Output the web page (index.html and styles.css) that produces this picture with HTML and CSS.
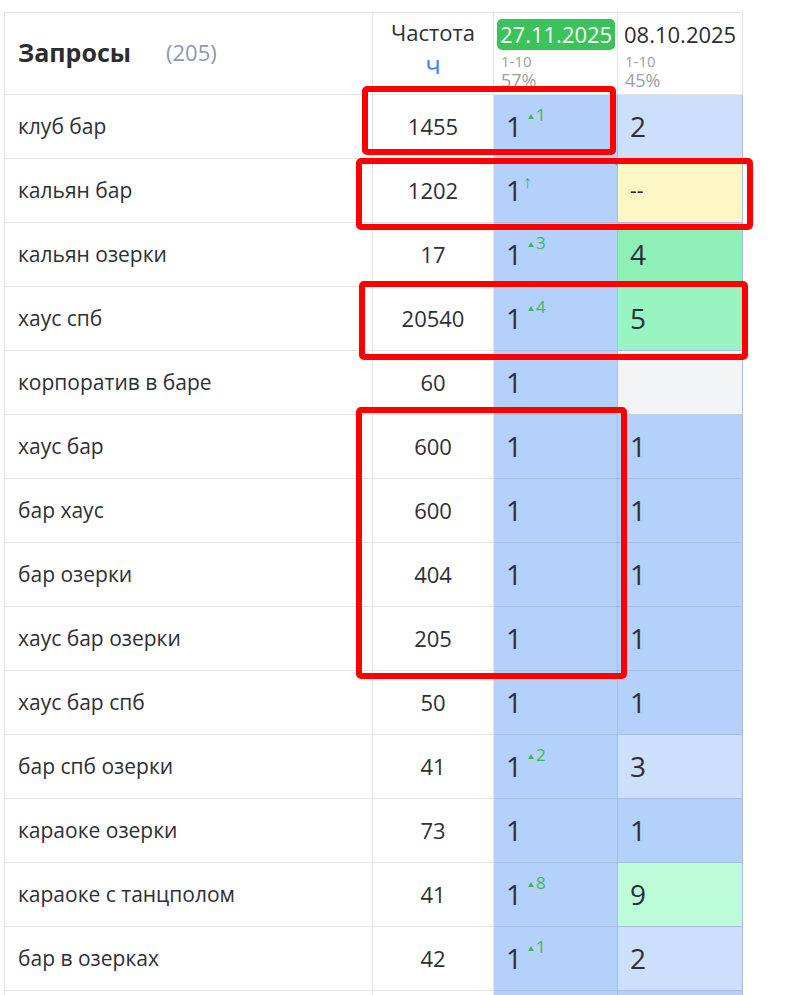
FILE: index.html
```html
<!DOCTYPE html>
<html lang="ru">
<head>
<meta charset="utf-8">
<link rel="stylesheet" href="styles.css">
</head>
<body>
<div class="page">
  <div class="grid">
    <div class="cell head qhead"><span class="title">Запросы</span><span class="count">(205)</span></div>
    <div class="cell head fhead"><span class="flabel">Частота</span><span class="flink">ч</span></div>
    <div class="cell head dhead"><span class="badge">27.11.2025</span><span class="sub">1-10</span><span class="sub pct">57%</span></div>
    <div class="cell head dhead"><span class="date">08.10.2025</span><span class="sub">1-10</span><span class="sub pct">45%</span></div>

    <div class="cell q">клуб бар</div><div class="cell f">1455</div><div class="cell d blue">1<span class="up"><i class="tri"></i>1</span></div><div class="cell d lblue">2</div>
    <div class="cell q">кальян бар</div><div class="cell f">1202</div><div class="cell d blue corner">1<span class="up arrow">↑</span></div><div class="cell d yellow">--</div>
    <div class="cell q">кальян озерки</div><div class="cell f">17</div><div class="cell d blue">1<span class="up"><i class="tri"></i>3</span></div><div class="cell d green">4</div>
    <div class="cell q">хаус спб</div><div class="cell f">20540</div><div class="cell d blue">1<span class="up"><i class="tri"></i>4</span></div><div class="cell d green2">5</div>
    <div class="cell q">корпоратив в баре</div><div class="cell f">60</div><div class="cell d blue">1</div><div class="cell d grey"></div>
    <div class="cell q">хаус бар</div><div class="cell f">600</div><div class="cell d blue">1</div><div class="cell d blue">1</div>
    <div class="cell q">бар хаус</div><div class="cell f">600</div><div class="cell d blue">1</div><div class="cell d blue">1</div>
    <div class="cell q">бар озерки</div><div class="cell f">404</div><div class="cell d blue">1</div><div class="cell d blue">1</div>
    <div class="cell q">хаус бар озерки</div><div class="cell f">205</div><div class="cell d blue">1</div><div class="cell d blue">1</div>
    <div class="cell q">хаус бар спб</div><div class="cell f">50</div><div class="cell d blue">1</div><div class="cell d blue">1</div>
    <div class="cell q">бар спб озерки</div><div class="cell f">41</div><div class="cell d blue">1<span class="up"><i class="tri"></i>2</span></div><div class="cell d lblue">3</div>
    <div class="cell q">караоке озерки</div><div class="cell f">73</div><div class="cell d blue">1</div><div class="cell d blue">1</div>
    <div class="cell q">караоке с танцполом</div><div class="cell f">41</div><div class="cell d blue">1<span class="up"><i class="tri"></i>8</span></div><div class="cell d mint">9</div>
    <div class="cell q">бар в озерках</div><div class="cell f">42</div><div class="cell d blue">1<span class="up"><i class="tri"></i>1</span></div><div class="cell d lblue">2</div>
    <div class="cell q"></div><div class="cell f"></div><div class="cell d blue"></div><div class="cell d blue"></div>
  </div>

  <div class="mark m1"></div>
  <div class="mark m2"></div>
  <div class="mark m3"></div>
  <div class="mark m4"></div>
</div>
</body>
</html>
```

FILE: styles.css
```css
* { box-sizing: border-box; }
html, body { margin: 0; padding: 0; background: #fff; overflow: hidden; }
body { font-family: "Open Sans", "Noto Sans", sans-serif; color: #2e2f33; }
.page { position: relative; width: 801px; height: 995px; padding: 12px 0 0 4px; overflow: hidden; }
.grid {
  display: grid;
  grid-template-columns: 368px 121px 124px 125px;
  grid-auto-rows: 64px;
  grid-template-rows: 82px;
  border-top: 1px solid #e3e3e3;
  border-left: 1px solid #e3e3e3;
  width: 738px;
}
.cell {
  border-right: 1px solid #e3e3e3;
  border-bottom: 1px solid #e3e3e3;
  display: flex;
  align-items: center;
  position: relative;
}
.head { flex-direction: column; align-items: flex-start; }
.qhead { flex-direction: row; align-items: center; padding: 0 0 4px 13px; }
.title { font-weight: 700; font-size: 25px; color: #2b2d31; }
.count { font-size: 22px; color: #8d9aab; margin-left: 35px; }
.fhead { align-items: center; padding-top: 5px; }
.flabel { font-size: 22px; line-height: 28px; color: #2e2f33; }
.flink { font-size: 25px; color: #3b82f6; line-height: 30px; margin-top: 3px; }
.dhead { padding: 6px 0 0 3px; overflow: hidden; }
.badge {
  background: #3cc25a;
  color: #fff;
  font-size: 22px;
  line-height: 31px;
  padding: 0 3px;
  border-radius: 5px;
}
.date { font-size: 22px; line-height: 31px; padding: 0 2px 0 3px; color: #2b2d31; }
.sub { font-size: 15px; line-height: 17px; color: #9aa0a9; padding-left: 4px; margin-top: 3px; }
.dhead .sub.pct { font-size: 18px; line-height: 20px; margin-top: 0; }
.q { font-size: 21px; padding-left: 13px; padding-bottom: 2px; }
.f { font-size: 22px; justify-content: center; padding-bottom: 2px; }
.d {
  font-size: 28px;
  padding-left: 12px;
  padding-bottom: 2px;
  border-bottom-color: #a9bde2;
  border-right-color: #a9bde2;
}
.blue { background: #b3d1fb; }
.lblue { background: #cce0fd; }
.yellow { background: #fdf6c5; font-size: 21px; }
.green { background: #8ef0b6; }
.green2 { background: #98f5c2; }
.mint { background: #bdfcd9; }
.grey { background: #f3f4f6; border-bottom-color: #c8cfdb; }
.up {
  position: absolute;
  left: 34px;
  top: 11px;
  font-size: 17px;
  line-height: 18px;
  color: #3cb85a;
  display: flex;
  align-items: center;
}
.up.arrow { left: 29px; top: 12px; font-size: 18px; line-height: 20px; }
.tri {
  width: 0; height: 0;
  border-left: 3px solid transparent;
  border-right: 3px solid transparent;
  border-bottom: 5px solid #3cb85a;
  margin-right: 2px;
  margin-top: 2px;
}
.corner::after {
  content: "";
  position: absolute;
  right: 0; top: 0;
  width: 0; height: 0;
  border-top: 7px solid #7f8ea8;
  border-left: 7px solid transparent;
}
.mark {
  position: absolute;
  border: 6px solid #ff0000;
  border-radius: 5px;
}
.m1 { left: 362px; top: 86px; width: 254px; height: 69px; }
.m2 { left: 356px; top: 158px; width: 397px; height: 72px; }
.m3 { left: 359px; top: 281px; width: 389px; height: 79px; }
.m4 { left: 356px; top: 407px; width: 271px; height: 272px; }
```
